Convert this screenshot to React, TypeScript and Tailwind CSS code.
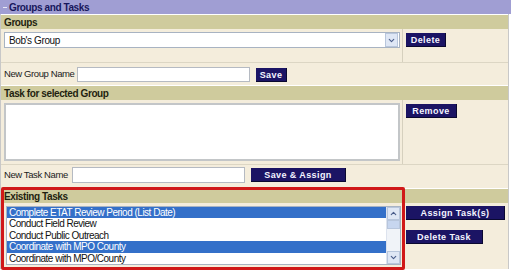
import { ChevronDown, ChevronUp } from 'lucide-react';

const tasks = [
  { name: 'Complete ETAT Review Period (List Date)', selected: true },
  { name: 'Conduct Field Review', selected: false },
  { name: 'Conduct Public Outreach', selected: false },
  { name: 'Coordinate with MPO County', selected: true },
  { name: 'Coordinate with MPO/County', selected: false },
];

function NavyButton({ label, className }: { label: string; className: string }) {
  return (
    <button
      className={`h-[14px] shrink-0 whitespace-nowrap bg-[#1b1464] text-[#f4f4ff] font-bold text-[9px] tracking-[0.4px] leading-[14px] text-center border-r border-b border-[#0a0830] ${className}`}
    >
      {label}
    </button>
  );
}

function SectionHeader({ title }: { title: string }) {
  return (
    <div className="h-[15px] bg-[#cfcb9d] border-t border-white flex items-center pl-[3px] text-[10px] font-bold tracking-[-0.4px] text-[#1f1f10]">
      {title}
    </div>
  );
}

export default function App() {
  return (
    <div className="w-[511px] h-[271px] overflow-hidden bg-white font-['Liberation_Sans',Arial,sans-serif] text-[#111]">
      {/* Title bar */}
      <div className="h-[14px] bg-[#a09ed3] flex items-center gap-[2px] pl-[2px] text-[10px] font-bold tracking-[-0.4px] text-[#17165c]">
        <span className="w-[5px] h-[6px] flex items-center justify-center">
          <span className="w-[4px] h-[1px] bg-[#e8e8f5]" />
        </span>
        Groups and Tasks
      </div>

      <div className="relative w-[509px] border-l border-r border-[#c8c8c8] bg-[#f4eddc]">
        <SectionHeader title="Groups" />

        {/* Group select row */}
        <div className="flex h-[34px] border-b border-[#dcd6c4]">
          <div className="w-[402px] pl-[3px] pt-[3px] border-r border-[#d6d0be]">
            <div className="h-[16px] w-[396px] bg-white border border-[#a8b3c2] flex items-center">
              <span className="flex-1 pl-[4px] text-[10px] tracking-[-0.4px]">Bob's Group</span>
              <span className="w-[13px] h-[14px] mr-[1px] bg-[#dfe7f5] border border-[#b8c6dc] flex items-center justify-center">
                <ChevronDown className="w-[9px] h-[9px] text-[#4a5d8a]" strokeWidth={3} />
              </span>
            </div>
          </div>
          <div className="pl-[3px] pt-[4px] flex flex-col items-start">
            <NavyButton label="Delete" className="w-[40px]" />
          </div>
        </div>

        {/* New group row */}
        <div className="flex items-center h-[22px] pl-[3px]">
          <span className="w-[73px] shrink-0 whitespace-nowrap text-[9.5px] tracking-[-0.4px] text-[#222]">New Group Name</span>
          <div className="w-[173px] shrink-0 h-[15px] bg-white border border-[#b5bac2]" />
          <NavyButton label="Save" className="ml-[6px] w-[31px] mt-[1px]" />
        </div>

        <SectionHeader title="Task for selected Group" />

        {/* Textarea row */}
        <div className="flex h-[65px] border-b border-[#dcd6c4]">
          <div className="w-[402px] pl-[3px] pt-[3px] border-r border-[#d6d0be]">
            <div className="w-[396px] h-[58px] bg-white border-2 border-[#c3c6c8]" />
          </div>
          <div className="pl-[3px] pt-[4px] flex flex-col items-start">
            <NavyButton label="Remove" className="w-[51px]" />
          </div>
        </div>

        {/* New task row */}
        <div className="flex items-center h-[20px] pl-[3px]">
          <span className="w-[68px] shrink-0 whitespace-nowrap text-[9.5px] tracking-[-0.4px] text-[#222]">New Task Name</span>
          <div className="w-[173px] shrink-0 h-[16px] bg-white border border-[#b5bac2]" />
          <NavyButton label="Save & Assign" className="ml-[6px] w-[95px]" />
        </div>

        <div className="h-[3px]" />
        <SectionHeader title="Existing Tasks" />

        {/* Existing tasks row */}
        <div className="flex h-[66px]">
          <div className="w-[402px] pl-[5px] pt-[3px]">
            <div className="w-[395px] h-[59px] bg-white border border-[#a8b3c2] flex">
              <div className="flex-1 text-[10px] tracking-[-0.5px] leading-[11.4px]">
                {tasks.map((t) => (
                  <div
                    key={t.name}
                    className={`pl-[2px] whitespace-nowrap ${t.selected ? 'bg-[#3470c9] text-white' : 'text-[#111]'}`}
                  >
                    {t.name}
                  </div>
                ))}
              </div>
              <div className="w-[14px] bg-[#f0f3f8] border-l border-[#dde3ee] flex flex-col">
                <span className="h-[13px] bg-[#dfe7f5] border border-[#b8c6dc] flex items-center justify-center">
                  <ChevronUp className="w-[9px] h-[9px] text-[#4a5d8a]" strokeWidth={3} />
                </span>
                <span className="h-[9px] bg-[#c7d6ef] border border-[#b8c6dc]" />
                <span className="mt-auto h-[13px] bg-[#dfe7f5] border border-[#b8c6dc] flex items-center justify-center">
                  <ChevronDown className="w-[9px] h-[9px] text-[#4a5d8a]" strokeWidth={3} />
                </span>
              </div>
            </div>
          </div>
          <div className="pl-[3px] pt-[3px] flex flex-col items-start gap-[10px]">
            <NavyButton label="Assign Task(s)" className="w-[99px]" />
            <NavyButton label="Delete Task" className="w-[77px]" />
          </div>
        </div>

        {/* Red highlight annotation */}
        <div className="absolute left-[0px] top-[173px] w-[404px] h-[83px] border-[3px] border-[#d01818] rounded-[2px] pointer-events-none" />
      </div>
    </div>
  );
}
